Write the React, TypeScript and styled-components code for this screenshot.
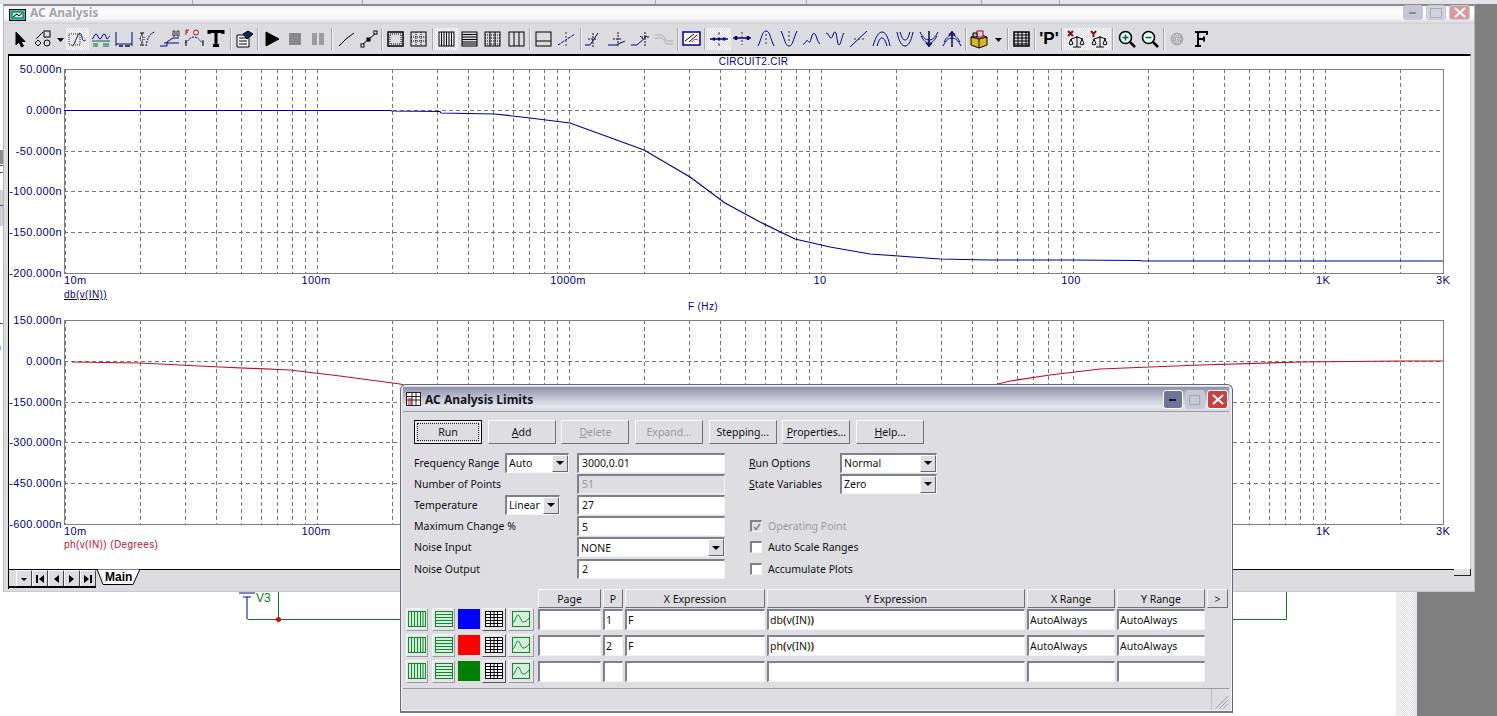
import { Fragment, ReactNode } from "react";
import styled, { createGlobalStyle } from "styled-components";

const GlobalStyle = createGlobalStyle`
  html, body {
    margin: 0;
    height: 100%;
    overflow: hidden;
    background: #fff;
  }
  body {
    font-family: "Noto Sans", "Liberation Sans", sans-serif;
    font-size: 10.5px;
    color: #111;
  }
`;

const BLUE = "#00008a";
const GREEN = "#0a8a2a";

const Desktop = styled.div`
  position: relative;
  width: 1497px;
  height: 716px;
  overflow: hidden;
  background: #fff;
`;

const Schematic = styled.svg`
  position: absolute;
  left: 0;
  top: 0;
`;

const RightGutter = styled.div`
  position: absolute;
  right: 0;
  top: 0;
  bottom: 0;
  width: 80px;
  background: #808080;
  border-left: 4px solid #e6e6ea;
`;

const Hatch = styled.div`
  position: absolute;
  left: 1396px;
  top: 0;
  bottom: 0;
  width: 17px;
  background: repeating-conic-gradient(#dcdce0 0 25%, #fff 0 50%) 0 0 / 2px 2px;
`;

const TopStrip = styled.div`
  position: absolute;
  left: 0;
  right: 0;
  top: 0;
  height: 4px;
  display: flex;
  background: #e4e4e8;
`;

const StripCell = styled.div<{ $w: number }>`
  width: ${(p) => p.$w}px;
  flex: none;
  border-right: 1px solid #a8a8ac;
`;

const MainWindow = styled.section`
  position: absolute;
  left: 3px;
  top: 4px;
  width: 1472px;
  height: 588px;
  box-sizing: border-box;
  display: flex;
  flex-direction: column;
  background: #dcdce0;
  border-top: 2px solid #8c8c90;
  border-left: 1px solid #b8b8bc;
  border-right: 1px solid #b8b8bc;
  border-bottom: 1px solid #c8c8d0;
`;

const MainTitle = styled.header`
  height: 18px;
  flex: none;
  display: flex;
  align-items: center;
  gap: 4px;
  padding-left: 5px;
  background: linear-gradient(180deg, #f2f2f4 0%, #ffffff 35%, #f4f4f6 70%, #d0d0d4 100%);
  position: relative;
`;

const MainTitleText = styled.span`
  font-weight: 700;
  font-size: 12px;
  color: #a4a4a8;
  transform: translateY(-3px);
`;

const CaptionGroup = styled.div<{ $gap: number; $right: number; $top: number }>`
  position: absolute;
  right: ${(p) => p.$right}px;
  top: ${(p) => p.$top}px;
  display: flex;
  gap: ${(p) => p.$gap}px;
`;

const CaptionButton = styled.div<{ $bg: string; $w: number; $h: number; $dim?: boolean }>`
  width: ${(p) => p.$w}px;
  height: ${(p) => p.$h}px;
  border-radius: 3px;
  background: ${(p) => p.$bg};
  border: 1px solid ${(p) => (p.$dim ? "#c6c8d8" : "#ffffff")};
  box-sizing: border-box;
  display: flex;
  align-items: center;
  justify-content: center;
`;

const Toolbar = styled.div`
  height: 30px;
  flex: none;
  display: flex;
  align-items: center;
  padding-left: 4px;
  background: #dcdce0;
`;

const ToolButton = styled.div<{ $pressed?: boolean; $w?: number }>`
  width: ${(p) => p.$w ?? 23.3}px;
  height: 22px;
  flex: none;
  box-sizing: border-box;
  display: flex;
  align-items: center;
  justify-content: center;
  ${(p) =>
    p.$pressed &&
    `background: repeating-conic-gradient(#dcdce0 0 25%, #fff 0 50%) 0 0 / 2px 2px;
     outline: 1px solid #eeeef0;
     outline-offset: -1px;`}
`;

const ToolSeparator = styled.div`
  width: 1px;
  height: 22px;
  margin: 0 2px 0 1px;
  flex: none;
  background: #a8a8ae;
  box-shadow: 1px 0 0 #f4f4f6;
`;

const PlotFrame = styled.div`
  flex: 1;
  margin: 0 3px 0 4px;
  min-height: 0;
  overflow: hidden;
  background: #fff;
  border-top: 2px solid #000;
  border-left: 1px solid #000;
  border-right: 1px solid #c8c8cc;
`;

const PlotSvg = styled.svg`
  display: block;
`;

const TabBar = styled.div`
  height: 20px;
  box-sizing: border-box;
  flex: none;
  margin: 0 3px 2px 4px;
  display: flex;
  align-items: flex-start;
  background: #dcdce0;
  border-top: 1px solid #000;
  border-left: 1px solid #000;
  position: relative;
`;

const NavGroup = styled.div`
  display: flex;
  height: 16px;
  flex: none;
  padding-left: 7px;
  border-bottom: 2px solid #000;
`;

const NavButton = styled.div`
  width: 16px;
  flex: none;
  box-sizing: border-box;
  background: #dcdce0;
  border-top: 1px solid #fff;
  border-left: 1px solid #fff;
  border-right: 1px solid #444;
  display: flex;
  align-items: center;
  justify-content: center;
`;

const TabShape = styled.svg`
  flex: none;
  margin: -1px 0 0 1px;
`;

const Grip = styled.div`
  position: absolute;
  right: 0;
  top: -1px;
  width: 17px;
  height: 7px;
  box-sizing: border-box;
  border-right: 1px solid #222;
  border-bottom: 1px solid #222;
  background: #e2e2e6;
`;

/* dialog */

const Dialog = styled.section`
  position: absolute;
  left: 400px;
  top: 384px;
  width: 833px;
  height: 329px;
  box-sizing: border-box;
  display: flex;
  flex-direction: column;
  background: #dedee2;
  border: 1px solid #66667a;
  border-bottom: 2px solid #77778c;
  border-radius: 6px 6px 0 0;
  padding: 2px 3px 0 2px;
  box-shadow: inset 0 0 0 1px #f2f2f6;
`;

const DialogTitle = styled.header`
  height: 24px;
  flex: none;
  display: flex;
  align-items: center;
  gap: 3px;
  padding-left: 3px;
  background: linear-gradient(180deg, #8d90ab 0%, #b6b8ca 35%, #e4e4ea 80%, #d8d8e0 100%);
  border-bottom: 1px solid #9a9aae;
  position: relative;
`;

const DialogTitleText = styled.span`
  font-weight: 700;
  font-size: 12px;
  color: #14141c;
`;

const ButtonRow = styled.div`
  display: flex;
  gap: 5.7px;
  padding: 8px 0 0 11px;
`;

const PushButton = styled.div<{ $default?: boolean; $disabled?: boolean }>`
  width: 68px;
  height: 24px;
  box-sizing: border-box;
  display: flex;
  align-items: center;
  justify-content: center;
  background: #dedee2;
  color: ${(p) => (p.$disabled ? "#98989c" : "#111")};
  border: 1px solid;
  border-color: #fafafc #70707a #70707a #fafafc;
  ${(p) =>
    p.$default &&
    `border: 1px solid #000;
     box-shadow: inset 0 0 0 1px #fafafc;
     outline: 1px dotted #222;
     outline-offset: -4px;`}
`;

const Key = styled.span`
  text-decoration: underline;
`;

const FormArea = styled.div`
  display: flex;
  padding: 8px 0 0 11px;
`;

const LeftForm = styled.div`
  width: 335px;
  flex: none;
  display: grid;
  grid-template-columns: 91px 72px 148px;
  grid-auto-rows: 21.2px;
  align-items: center;
`;

const RightForm = styled.div`
  display: grid;
  grid-template-columns: 91px 97px;
  grid-auto-rows: 21.2px;
  align-items: center;
`;

const FieldLabel = styled.label<{ $span?: number }>`
  grid-column: span ${(p) => p.$span ?? 1};
  white-space: nowrap;
`;

const Field = styled.div<{ $disabled?: boolean }>`
  height: 20px;
  box-sizing: border-box;
  display: flex;
  align-items: center;
  padding-left: 3px;
  background: ${(p) => (p.$disabled ? "#dedee2" : "#fff")};
  color: ${(p) => (p.$disabled ? "#9a9a9e" : "#111")};
  border-style: solid;
  border-width: 2px 1px 1px 2px;
  border-color: #80808a #f4f4f8 #f4f4f8 #80808a;
  white-space: nowrap;
  overflow: hidden;
`;

const SelectBox = styled(Field)<{ $w?: number }>`
  position: relative;
  width: ${(p) => (p.$w ? `${p.$w}px` : "auto")};
  background: #fff;
  padding-left: 2px;
  padding-right: 16px;
`;

const SelectArrow = styled.div`
  position: absolute;
  right: 0;
  top: 0;
  bottom: 0;
  width: 16px;
  background: #dedee2;
  border: 1px solid;
  border-color: #fff #66666e #66666e #fff;
  box-sizing: border-box;
  display: flex;
  align-items: center;
  justify-content: center;
  &::after {
    content: "";
    border-left: 4px solid transparent;
    border-right: 4px solid transparent;
    border-top: 4px solid #000;
  }
`;

const CheckRow = styled.div<{ $disabled?: boolean }>`
  grid-column: span 2;
  display: flex;
  align-items: center;
  gap: 6px;
  color: ${(p) => (p.$disabled ? "#9a9a9e" : "#111")};
  white-space: nowrap;
`;

const CheckBox = styled.div<{ $disabled?: boolean }>`
  width: 12px;
  height: 12px;
  margin-left: 1px;
  box-sizing: border-box;
  background: ${(p) => (p.$disabled ? "#dedee2" : "#fff")};
  border-style: solid;
  border-width: 2px 1px 1px 2px;
  border-color: #80808a #f4f4f8 #f4f4f8 #80808a;
  display: flex;
  align-items: center;
  justify-content: center;
`;

const Table = styled.div`
  display: grid;
  grid-template-columns: 130px 63px 20px 140px 258px 88px 88px 21px;
  column-gap: 2px;
  margin: 10px 0 0 3px;
  align-items: stretch;
`;

const HeaderCell = styled.div`
  height: 19px;
  box-sizing: border-box;
  display: flex;
  align-items: center;
  justify-content: center;
  background: #dedee2;
  border: 1px solid;
  border-color: #f8f8fa #70707a #70707a #f8f8fa;
`;

const Blank = styled.div``;

const RowTools = styled.div`
  display: flex;
  gap: 2px;
  height: 26px;
  align-items: flex-start;
`;

const PlotTool = styled.div<{ $w?: number; $ml?: number; $raised?: boolean }>`
  width: ${(p) => p.$w ?? 22}px;
  height: 23px;
  margin-left: ${(p) => p.$ml ?? 0}px;
  flex: none;
  box-sizing: border-box;
  background: #e6e6ea;
  border: 1px solid;
  border-color: #f8f8fa ${(p) => (p.$raised ? "#55555c" : "#9a9aa0")} ${(p) => (p.$raised ? "#55555c" : "#9a9aa0")} #f8f8fa;
  display: flex;
  align-items: center;
  justify-content: center;
`;

const ColorTile = styled.div<{ $color: string }>`
  width: 22px;
  height: 20px;
  margin: 1px 0 0 1px;
  flex: none;
  background: ${(p) => p.$color};
`;

const Cell = styled(Field)`
  height: 21px;
  padding-left: 1px;
  margin-top: 1px;
`;

const ParenR = styled.b`
  color: #7a0c14;
`;

const ParenG = styled.b`
  color: #0a7020;
`;

const StatusBar = styled.div`
  flex: none;
  display: flex;
  height: 21px;
  margin-top: 2px;
  border-top: 1px solid #9a9aa0;
`;

const StatusFill = styled.div`
  width: 808px;
  flex: none;
  border-right: 1px solid #c0c0c6;
`;

const Resizer = styled.svg`
  margin-left: auto;
  align-self: flex-end;
`;

/* drawings */

const Ic = ({ children, c = "#000", w = 1 }: { children: ReactNode; c?: string; w?: number }) => (
  <svg width={22} height={22} viewBox="0 0 22 22" fill="none" stroke={c} strokeWidth={w}>
    {children}
  </svg>
);

const Caret = () => (
  <svg width="7" height="22" viewBox="0 0 7 22">
    <path d="M0 10h7l-3.5 4z" fill="#000" />
  </svg>
);

const iconSet: { n: ReactNode; p?: boolean; w?: number; sep?: boolean }[] = [
  { n: <Ic><path d="M7 4v13l3-3 2.5 5 2-1-2.5-4.5H16z" fill="#000" /></Ic> },
  {
    n: (
      <Ic>
        <path d="M4 11 11 4" />
        <rect x="12" y="3" width="6" height="6" />
        <path d="M6 12l3 3-3 3-3-3z" />
        <circle cx="15" cy="15" r="3" />
      </Ic>
    ),
  },
  { n: <Caret />, w: 11 },
  {
    p: true,
    n: (
      <Ic c="#222">
        <rect x="3" y="6" width="11" height="11" strokeDasharray="1 1" />
        <path d="M6 18c2-1 3-4 5-9 2-5 4-5 5 0s2 4 4 3" stroke={BLUE} />
      </Ic>
    ),
  },
  {
    n: (
      <Ic c={BLUE}>
        <path d="M2 11c2 0 2-5 4-5s2 5 4 5 2-5 4-5 2 5 3 5 2-3 3-3" />
        <path d="M2 13h18M3 16h5M13 16h6M3 18h5M13 18h6" stroke="#064" />
      </Ic>
    ),
  },
  {
    n: (
      <Ic c={BLUE}>
        <path d="M3 4v12h16V4" />
        <path d="M3 18v-2M19 18v-2" stroke="#111" />
        <path d="M6 18h4M12 18h5" stroke="#111" strokeWidth="1.5" />
      </Ic>
    ),
  },
  {
    n: (
      <Ic>
        <path d="M4 5h4M6 5v3M6 13v3M4 17h4" />
        <rect x="4" y="9" width="4" height="3" strokeDasharray="1 1" />
        <path d="M10 18c1-6 3-13 9-14" stroke={BLUE} strokeDasharray="2 1" />
      </Ic>
    ),
  },
  {
    n: (
      <Ic c={BLUE}>
        <path d="M1 18h7M8 18V14l6-4h6M5 15h15" />
        <path d="M14 3h2v5h-2zM18 3h2v5h-2z" stroke="#333" />
      </Ic>
    ),
  },
  {
    n: (
      <Ic>
        <path d="M2 15c3-1 4-6 9-6s6 5 9 6" stroke={BLUE} strokeDasharray="2 1" />
        <path d="M6 2H3v5M3 4h2" stroke="#b01018" />
        <circle cx="13" cy="4.5" r="2.5" stroke="#b01018" />
        <path d="M3 12v6M20 12v6" />
      </Ic>
    ),
  },
  {
    n: (
      <Ic w={3}>
        <path d="M3 6V3.5h14V6M10 4v13M7 17.5h6" />
      </Ic>
    ),
  },
  { sep: true, n: null },
  {
    n: (
      <Ic>
        <path d="M4 7h12v12H4z" fill="#fff" />
        <path d="M6 10h8M6 13h8M6 16h8" />
        <path d="M10 6l5-3 5 3-6 5z" fill="#0a2a6a" />
      </Ic>
    ),
  },
  { sep: true, n: null },
  { n: <Ic><path d="M5 4l13 7-13 7z" fill="#000" /></Ic> },
  { n: <Ic><rect x="5" y="5" width="12" height="12" fill="#8a8a8e" stroke="none" /></Ic> },
  { n: <Ic><path d="M5 5h5v12H5zM12 5h5v12h-5z" fill="#9c9ca0" stroke="none" /></Ic> },
  { sep: true, n: null },
  { n: <Ic><path d="M4 18 11 11 19 5" /></Ic> },
  {
    n: (
      <Ic>
        <path d="M5 16 17 6" />
        <rect x="3" y="16" width="3" height="3" fill="#fff" />
        <rect x="9" y="10" width="3" height="3" fill="#000" />
        <rect x="16" y="3" width="3" height="3" fill="#fff" />
      </Ic>
    ),
  },
  { sep: true, n: null },
  {
    n: (
      <Ic>
        <rect x="3" y="4" width="15" height="14" strokeWidth="1.5" />
        <rect x="5" y="6" width="11" height="10" strokeDasharray="1 1" />
      </Ic>
    ),
  },
  {
    n: (
      <Ic>
        <rect x="3" y="4" width="15" height="14" />
        <path d="M8 4v14M13 4v14M3 9h15M3 13h15" strokeDasharray="1 1" />
      </Ic>
    ),
  },
  { sep: true, n: null },
  {
    p: true,
    n: (
      <Ic>
        <rect x="3" y="4" width="15" height="14" />
        <path d="M5.5 4v14M8 4v14M10.5 4v14M13 4v14M15.5 4v14" />
      </Ic>
    ),
  },
  {
    n: (
      <Ic>
        <rect x="3" y="4" width="15" height="14" />
        <path d="M3 6.5h15M3 9h15M3 11.5h15M3 14h15M3 16h15" />
      </Ic>
    ),
  },
  {
    n: (
      <Ic>
        <rect x="3" y="4" width="15" height="14" />
        <path d="M8 4v14M13 4v14" />
        <path d="M3 7h15M3 10h15M3 13h15M3 16h15" strokeDasharray="1 1" />
      </Ic>
    ),
  },
  {
    n: (
      <Ic>
        <rect x="3" y="4" width="15" height="14" />
        <path d="M8 4v14M13 4v14" />
      </Ic>
    ),
  },
  { sep: true, n: null },
  {
    n: (
      <Ic>
        <rect x="3" y="4" width="15" height="14" />
        <path d="M3 13h15" />
      </Ic>
    ),
  },
  {
    n: (
      <Ic c={BLUE}>
        <path d="M2 17 19 6" strokeDasharray="3 1" />
        <path d="M10 4v14" stroke="#333" strokeDasharray="2 2" />
      </Ic>
    ),
  },
  { sep: true, n: null },
  {
    n: (
      <Ic c={BLUE}>
        <path d="M2 17h5l8-12" />
        <path d="M10 5v14M5 11h9" stroke="#111" strokeDasharray="2 1" />
      </Ic>
    ),
  },
  {
    n: (
      <Ic c={BLUE}>
        <path d="M1 17h8l9-4" />
        <path d="M11 4v14M6 11h9" stroke="#111" strokeDasharray="2 1" />
      </Ic>
    ),
  },
  {
    n: (
      <Ic c={BLUE}>
        <path d="M1 17h6l10-9" />
        <path d="M10 8 13 11M15 4v14M11 9h8" stroke="#111" strokeDasharray="2 1" />
      </Ic>
    ),
  },
  {
    n: (
      <Ic c="#aaa">
        <path d="M2 7h6c4 0 3 6 7 6h5M2 10h6c4 0 3 6 7 6h5" />
      </Ic>
    ),
  },
  { sep: true, n: null },
  {
    n: (
      <Ic>
        <rect x="2" y="4" width="17" height="13" stroke={BLUE} fill="#fff" strokeWidth="1.5" />
        <path d="M4 13 13 6M8 14l8-7" />
        <path d="M11 14c2-3 4-3 6-2" stroke="#c01018" />
      </Ic>
    ),
  },
  { sep: true, n: null },
  {
    p: true,
    n: (
      <Ic c={BLUE}>
        <path d="M2 11h18" strokeWidth="1.5" />
        <path d="M6 9.5v3M11 9.5v3M16 9.5v3" strokeWidth="2.5" />
        <path d="M11 4v3M11 15v3" stroke="#333" />
      </Ic>
    ),
  },
  {
    n: (
      <Ic c={BLUE}>
        <path d="M2 10h18" strokeWidth="1.5" />
        <path d="M5 8v4M17 8v4" strokeWidth="2.5" />
        <path d="M11 4v13" stroke="#333" strokeDasharray="2 2" />
      </Ic>
    ),
  },
  { n: <Ic c={BLUE}><path d="M3 18C7 10 7 3 11 3s4 7 8 15" /><path d="M11 6v12" strokeDasharray="2 2" stroke="#333" /></Ic> },
  { n: <Ic c={BLUE}><path d="M3 3c4 8 4 15 8 15s4-7 8-15" /><path d="M11 3v12" strokeDasharray="2 2" stroke="#333" /></Ic> },
  { n: <Ic c={BLUE}><path d="M2 16c2 1 3-5 5-3s2 2 3-2 2-7 4-5 2 8 5 10" /></Ic> },
  { n: <Ic c={BLUE}><path d="M2 5c3 0 3 5 5 5s2-6 4-6 2 13 4 13 3-10 5-12" /></Ic> },
  { n: <Ic c={BLUE}><path d="M2 19 19 3" /><path d="M6 11h10" stroke="#333" strokeDasharray="2 2" /></Ic> },
  { n: <Ic c={BLUE}><path d="M2 18C5 8 8 4 11 4s6 4 8 14M6 18c2-6 3-8 5-8s3 2 5 8" /></Ic> },
  { n: <Ic c={BLUE}><path d="M3 4c2 10 5 14 8 14s6-4 8-14M6 4c2 6 3 8 5 8s3-2 5-8" /></Ic> },
  {
    n: (
      <Ic c={BLUE}>
        <path d="M2 4c3 6 6 8 9 8s6-2 9-8M3 8c3 5 5 7 8 7s5-2 8-7" />
        <path d="M11 3v16M8 15l3 3 3-3" stroke="#0a0a5a" strokeWidth="1.5" />
      </Ic>
    ),
  },
  {
    n: (
      <Ic c={BLUE}>
        <path d="M2 18c3-6 6-8 9-8s6 2 9 8M3 14c3-5 5-7 8-7s5 2 8 7" />
        <path d="M11 3v16M8 7l3-3 3 3" stroke="#0a0a5a" strokeWidth="1.5" />
      </Ic>
    ),
  },
  { sep: true, n: null },
  {
    n: (
      <Ic>
        <path d="M3 9l8-3 8 3v8l-8 3-8-3z" fill="#d8b818" />
        <path d="M11 11v9M3 9l8 2 8-2" />
        <rect x="9" y="3" width="6" height="6" fill="#e8c8c8" stroke="#901030" />
        <path d="M5 5h4v4H5z" fill="#b8b0a0" />
      </Ic>
    ),
  },
  { n: <Caret />, w: 15 },
  { sep: true, n: null },
  {
    n: (
      <Ic>
        <rect x="3" y="4" width="15" height="14" strokeWidth="1.5" />
        <path d="M3 7h15M3 10h15M3 13h15M3 16h15M7 4v14M11 4v14M15 4v14" />
      </Ic>
    ),
  },
  { sep: true, n: null },
  {
    n: (
      <Ic w={0}>
        <text x="11" y="16" textAnchor="middle" fontFamily="Liberation Sans" fontWeight="700" fontSize="17" fill="#000" stroke="none">
          'P'
        </text>
      </Ic>
    ),
  },
  { sep: true, n: null },
  {
    p: true,
    n: (
      <Ic>
        <path d="M3 3l5 5M8 3 3 8" stroke="#801018" strokeWidth="2" />
        <path d="M12 8v11M8 19h8M6 11l6-2 6 2M4 16c1 1 3 1 4 0l-2-5zM15 16c1 1 3 1 4 0l-2-5z" />
      </Ic>
    ),
  },
  {
    p: true,
    n: (
      <Ic>
        <path d="M3 3l2.5 3L8 3M5.5 6v3" stroke="#801018" strokeWidth="2" />
        <path d="M12 8v11M8 19h8M6 11l6-2 6 2M4 16c1 1 3 1 4 0l-2-5zM15 16c1 1 3 1 4 0l-2-5z" />
      </Ic>
    ),
  },
  { sep: true, n: null },
  {
    n: (
      <Ic>
        <circle cx="9.5" cy="9.5" r="6" strokeWidth="1.6" fill="#e8fff8" />
        <path d="M14 14l5 5" strokeWidth="2.5" />
        <path d="M6.5 9.5h6M9.5 6.5v6" strokeWidth="1.5" stroke="#064" />
      </Ic>
    ),
  },
  {
    n: (
      <Ic>
        <circle cx="9.5" cy="9.5" r="6" strokeWidth="1.6" fill="#e8fff8" />
        <path d="M14 14l5 5" strokeWidth="2.5" />
        <path d="M6.5 9.5h6" strokeWidth="1.5" stroke="#064" />
      </Ic>
    ),
  },
  { sep: true, n: null },
  {
    n: (
      <Ic c="#a8a8ac">
        <circle cx="11" cy="11" r="6" fill="#b0b0b4" />
        <path d="M6 11h10M11 6v10M7 8h8M7 14h8" stroke="#e8e8ea" strokeDasharray="1 1" />
      </Ic>
    ),
  },
  {
    n: (
      <Ic w={2}>
        <path d="M5 4h12v3M5 18h6M8 4v14M8 11h6M14 8.5v5" />
      </Ic>
    ),
  },
];

const xTicks = (() => {
  const out: number[] = [];
  for (let d = 0; d < 6; d++) {
    for (let m = 1; m < 10; m++) {
      const x = 64.5 + (d + Math.log10(m)) * 252;
      if (x < 1443) out.push(Math.round(x) + 0.5);
    }
  }
  return out.filter((x) => x > 65);
})();

const topXLabels: [string, number][] = [
  ["100m", 316],
  ["1000m", 568],
  ["10", 820],
  ["100", 1071],
  ["1K", 1323],
];

// the rest of the lower axis sits behind the limits dialog
const lowerXLabels: [string, number][] = [
  ["100m", 316],
  ["1K", 1323],
];

const Plot = ({
  top,
  labels,
  xLabels,
  curves,
  color,
}: {
  top: number;
  labels: string[];
  xLabels: [string, number][];
  curves: string[];
  color: string;
}) => (
  <g>
    {[1, 2, 3, 4].map((i) => {
      const y = Math.round(top + i * 40.8) + 0.5;
      return <line key={i} x1="64" x2="1443" y1={y} y2={y} stroke="#777" strokeDasharray="4 3" />;
    })}
    {xTicks.map((x) => (
      <line key={x} x1={x} x2={x} y1={top} y2={top + 204} stroke="#777" strokeDasharray="4 3" />
    ))}
    <rect x="64.5" y={top + 0.5} width="1379" height="204" fill="none" stroke="#808080" />
    {labels.map((l, i) => (
      <text key={l} x="62" y={top + 4 + Math.round(i * 40.8)} textAnchor="end" fill={BLUE} fontSize="11" letterSpacing=".35">
        {l}
      </text>
    ))}
    <text x="64" y={top + 215} fill={BLUE} fontSize="11" letterSpacing=".35">10m</text>
    {xLabels.map(([l, x]) => (
      <text key={l} x={x} y={top + 215} textAnchor="middle" fill={BLUE} fontSize="11" letterSpacing=".35">
        {l}
      </text>
    ))}
    <text x="1443" y={top + 215} textAnchor="middle" fill={BLUE} fontSize="11" letterSpacing=".35">3K</text>
    {curves.map((c) => (
      <polyline key={c} points={c} fill="none" stroke={color} strokeWidth="1.2" />
    ))}
  </g>
);

const GridGlyph = ({ mode }: { mode: "v" | "h" | "t" | "w" }) => (
  <svg width="20" height="19" viewBox="0 0 20 19" fill="none" stroke={mode === "t" ? "#000" : GREEN}>
    <rect x="1.5" y="1.5" width="17" height="15" fill={mode === "t" ? "#fff" : "#d8eedc"} />
    {mode === "v" && <path d="M4.5 2v14M7.5 2v14M10.5 2v14M13.5 2v14M16 2v14" />}
    {mode === "h" && <path d="M2 4.5h16M2 7.5h16M2 10.5h16M2 13.5h16" />}
    {mode === "t" && <path d="M2 4.5h16M2 7.5h16M2 10.5h16M2 13.5h16M6.5 2v14M10 2v14M13.5 2v14" />}
    {mode === "w" && <path d="M2 13c2-1 3-8 5-8s3 7 5 7 4-1 6-4" />}
  </svg>
);

const Expr = ({ name }: { name: string }) => (
  <span>
    {name}
    <ParenR>(</ParenR>v<ParenG>(</ParenG>IN<ParenG>)</ParenG>
    <ParenR>)</ParenR>
  </span>
);

const rows = [
  { color: "#0000ff", p: "1", x: "F", y: <Expr name="db" />, xr: "AutoAlways", yr: "AutoAlways" },
  { color: "#ff0000", p: "2", x: "F", y: <Expr name="ph" />, xr: "AutoAlways", yr: "AutoAlways" },
  { color: "#008000", p: "", x: "", y: null, xr: "", yr: "" },
];

const plotCurve1 =
  "64,110.5 390,110.5 392,111 440,111.5 441,113 495,114 530,118 570,123 644,150 690,177 725,203 760,222 795,239 830,247 870,254 940,259 990,260 1071,260 1140,260.5 1143,261 1443,261";
const plotCurve2Left = "72,362 140,363 180,365 220,367 290,370 340,376 400,384 430,392";
const plotCurve2Right = "990,386 1010,381 1050,375 1100,369 1200,365 1300,362 1400,361 1443,361";

export default function App() {
  return (
    <Desktop>
      <GlobalStyle />
      <Hatch />
      <RightGutter />
      <Schematic width="1497" height="716" viewBox="0 0 1497 716">
        <rect x="0" y="150" width="3" height="14" fill="#8c8c8c" />
        <rect x="0" y="190" width="3" height="36" fill="#d0d0d4" />
        <g fill="none">
          <path d="M247 597v22M239 593h16M243 597h8" stroke="#0000a0" />
          <path d="M247.5 619.5H400M278.5 590V619M1232 619.5H1286.5V590" stroke="#0a7a2a" />
          <path d="M0 165.5h3M0 172.5h3M0 205.5h3M0 323.5h3" stroke="#555" />
        </g>
        <text x="-3" y="351" fontSize="12" fill="#0000a0" fontFamily="Liberation Sans">)</text>
        <circle cx="278.5" cy="619.5" r="2.5" fill="#e00010" />
        <text x="256" y="602" fontSize="12" fill="#0a7a2a" fontFamily="Liberation Sans">V3</text>
      </Schematic>
      <TopStrip>
        <StripCell $w={192} />
        <StripCell $w={169} />
        <StripCell $w={292} />
        <StripCell $w={150} />
        <StripCell $w={174} />
        <StripCell $w={77} />
      </TopStrip>

      <MainWindow>
        <MainTitle>
          <svg width="17" height="12" viewBox="0 0 17 12">
            <rect x=".5" y=".5" width="16" height="11" fill="#39c0b8" stroke="#000" />
            <rect x="3" y="3" width="11" height="6" fill="#bfe8e4" stroke="#064" />
            <path d="M4 8l4-3 2 2 3-3" stroke="#000" fill="none" />
          </svg>
          <MainTitleText>AC Analysis</MainTitleText>
          <CaptionGroup $gap={3} $right={4} $top={-1}>
            <CaptionButton $bg="#c4c6d4" $w={20} $h={15} $dim>
              <svg width="8" height="4"><rect y="1" width="7" height="2" fill="#8a8c98" /></svg>
            </CaptionButton>
            <CaptionButton $bg="#d2d3de" $w={20} $h={15} $dim>
              <svg width="12" height="10"><rect x=".5" y=".5" width="11" height="9" fill="none" stroke="#a8a8b4" /></svg>
            </CaptionButton>
            <CaptionButton $bg="#d89a9c" $w={21} $h={15} $dim>
              <svg width="12" height="11" stroke="#fff" strokeWidth="2"><path d="M1 1l10 9M11 1 1 10" /></svg>
            </CaptionButton>
          </CaptionGroup>
        </MainTitle>

        <Toolbar>
          {iconSet.map((it, i) =>
            it.sep ? (
              <ToolSeparator key={i} />
            ) : (
              <ToolButton key={i} $pressed={it.p} $w={it.w}>
                {it.n}
              </ToolButton>
            )
          )}
        </Toolbar>

        <PlotFrame>
          <PlotSvg width="1461" height="513" viewBox="9 56 1461 513" fontFamily="Liberation Sans">
            <text x="753.5" y="65" textAnchor="middle" fontSize="10" letterSpacing=".3" fill={BLUE}>CIRCUIT2.CIR</text>
            <Plot
              top={69}
              labels={["50.000n", "0.000n", "-50.000n", "-100.000n", "-150.000n", "-200.000n"]}
              xLabels={topXLabels}
              curves={[plotCurve1]}
              color="#0000a0"
            />
            <text x="64" y="298" fontSize="10" letterSpacing=".4" fill={BLUE} textDecoration="underline">db(v(IN))</text>
            <text x="703" y="310" textAnchor="middle" fontSize="10" letterSpacing=".4" fill={BLUE}>F (Hz)</text>
            <Plot
              top={320}
              labels={["150.000n", "0.000n", "-150.000n", "-300.000n", "-450.000n", "-600.000n"]}
              xLabels={lowerXLabels}
              curves={[plotCurve2Left, plotCurve2Right]}
              color="#c01020"
            />
            <text x="64" y="548" fontSize="10" letterSpacing=".4" fill="#c01030">ph(v(IN)) (Degrees)</text>
          </PlotSvg>
        </PlotFrame>

        <TabBar>
          <NavGroup>
            <NavButton><svg width="8" height="8"><path d="M1 3h6L4 6z" /></svg></NavButton>
            <NavButton><svg width="10" height="10"><path d="M1 1h2v8H1zM9 1v8L4 5z" /></svg></NavButton>
            <NavButton><svg width="10" height="10"><path d="M8 1v8L3 5z" /></svg></NavButton>
            <NavButton><svg width="10" height="10"><path d="M2 1v8l5-4z" /></svg></NavButton>
            <NavButton><svg width="10" height="10"><path d="M1 1v8l5-4zM7 1h2v8H7z" /></svg></NavButton>
          </NavGroup>
          <TabShape width="44" height="17" viewBox="0 0 44 17">
            <path d="M0 0 6 15.5H36L43 0z" fill="#fff" stroke="#000" />
            <text x="8" y="12" fontFamily="Liberation Sans" fontSize="12" fontWeight="700" fill="#000">Main</text>
          </TabShape>
          <Grip />
        </TabBar>
      </MainWindow>

      <Dialog>
        <DialogTitle>
          <svg width="16" height="16" viewBox="0 0 16 16" fill="none" stroke="#222">
            <rect x=".5" y="1.5" width="14" height="13" fill="#fff" />
            <path d="M1 5.5h14M1 9h14M6 2v12M10 2v12" />
            <path d="M3 7v7M5 7v7" stroke="#b01018" />
          </svg>
          <DialogTitleText>AC Analysis Limits</DialogTitleText>
          <CaptionGroup $gap={2} $right={1} $top={3}>
            <CaptionButton $bg="#6f7396" $w={20} $h={19}>
              <svg width="8" height="4"><rect y="1" width="7" height="2" fill="#15151f" /></svg>
            </CaptionButton>
            <CaptionButton $bg="#c6c8d6" $w={20} $h={19} $dim>
              <svg width="12" height="10"><rect x=".5" y=".5" width="10" height="9" fill="none" stroke="#a8a8b4" /></svg>
            </CaptionButton>
            <CaptionButton $bg="#c84040" $w={21} $h={19}>
              <svg width="12" height="11" stroke="#fff" strokeWidth="2"><path d="M1 1l10 9M11 1 1 10" /></svg>
            </CaptionButton>
          </CaptionGroup>
        </DialogTitle>

        <ButtonRow>
          <PushButton $default>Run</PushButton>
          <PushButton><span><Key>A</Key>dd</span></PushButton>
          <PushButton $disabled><span><Key>D</Key>elete</span></PushButton>
          <PushButton $disabled>Expand...</PushButton>
          <PushButton>Stepping...</PushButton>
          <PushButton><span><Key>P</Key>roperties...</span></PushButton>
          <PushButton><span><Key>H</Key>elp...</span></PushButton>
        </ButtonRow>

        <FormArea>
          <LeftForm>
            <FieldLabel>Frequency Range</FieldLabel>
            <SelectBox $w={64}>Auto<SelectArrow /></SelectBox>
            <Field>3000,0.01</Field>

            <FieldLabel $span={2}>Number of Points</FieldLabel>
            <Field $disabled>51</Field>

            <FieldLabel>Temperature</FieldLabel>
            <SelectBox $w={55}>Linear<SelectArrow /></SelectBox>
            <Field>27</Field>

            <FieldLabel $span={2}>Maximum Change %</FieldLabel>
            <Field>5</Field>

            <FieldLabel $span={2}>Noise Input</FieldLabel>
            <SelectBox>NONE<SelectArrow /></SelectBox>

            <FieldLabel $span={2}>Noise Output</FieldLabel>
            <Field>2</Field>
          </LeftForm>

          <RightForm>
            <FieldLabel><Key>R</Key>un Options</FieldLabel>
            <SelectBox>Normal<SelectArrow /></SelectBox>
            <FieldLabel><Key>S</Key>tate Variables</FieldLabel>
            <SelectBox>Zero<SelectArrow /></SelectBox>
            <Blank />
            <Blank />
            <CheckRow $disabled>
              <CheckBox $disabled>
                <svg width="8" height="8" fill="none" stroke="#88888c" strokeWidth="1.6"><path d="M1 4l2 2.5L7 1" /></svg>
              </CheckBox>
              Operating Point
            </CheckRow>
            <CheckRow><CheckBox />Auto Scale Ranges</CheckRow>
            <CheckRow><CheckBox />Accumulate Plots</CheckRow>
          </RightForm>
        </FormArea>

        <Table>
          <Blank />
          <HeaderCell>Page</HeaderCell>
          <HeaderCell>P</HeaderCell>
          <HeaderCell>X Expression</HeaderCell>
          <HeaderCell>Y Expression</HeaderCell>
          <HeaderCell>X Range</HeaderCell>
          <HeaderCell>Y Range</HeaderCell>
          <HeaderCell>&gt;</HeaderCell>
          {rows.map((r, i) => (
            <Fragment key={i}>
              <RowTools>
                <PlotTool><GridGlyph mode="v" /></PlotTool>
                <PlotTool $w={23} $ml={2}><GridGlyph mode="h" /></PlotTool>
                <ColorTile $color={r.color} />
                <PlotTool $w={24} $raised><GridGlyph mode="t" /></PlotTool>
                <PlotTool $w={26}><GridGlyph mode="w" /></PlotTool>
              </RowTools>
              <Cell />
              <Cell>{r.p}</Cell>
              <Cell>{r.x}</Cell>
              <Cell>{r.y}</Cell>
              <Cell>{r.xr}</Cell>
              <Cell>{r.yr}</Cell>
              <Blank />
            </Fragment>
          ))}
        </Table>

        <StatusBar>
          <StatusFill />
          <Resizer width="18" height="18" viewBox="0 0 18 18" stroke="#9a9aa0" fill="none">
            <path d="M17 4 4 17M17 8 8 17M17 12 12 17" />
          </Resizer>
        </StatusBar>
      </Dialog>
    </Desktop>
  );
}
